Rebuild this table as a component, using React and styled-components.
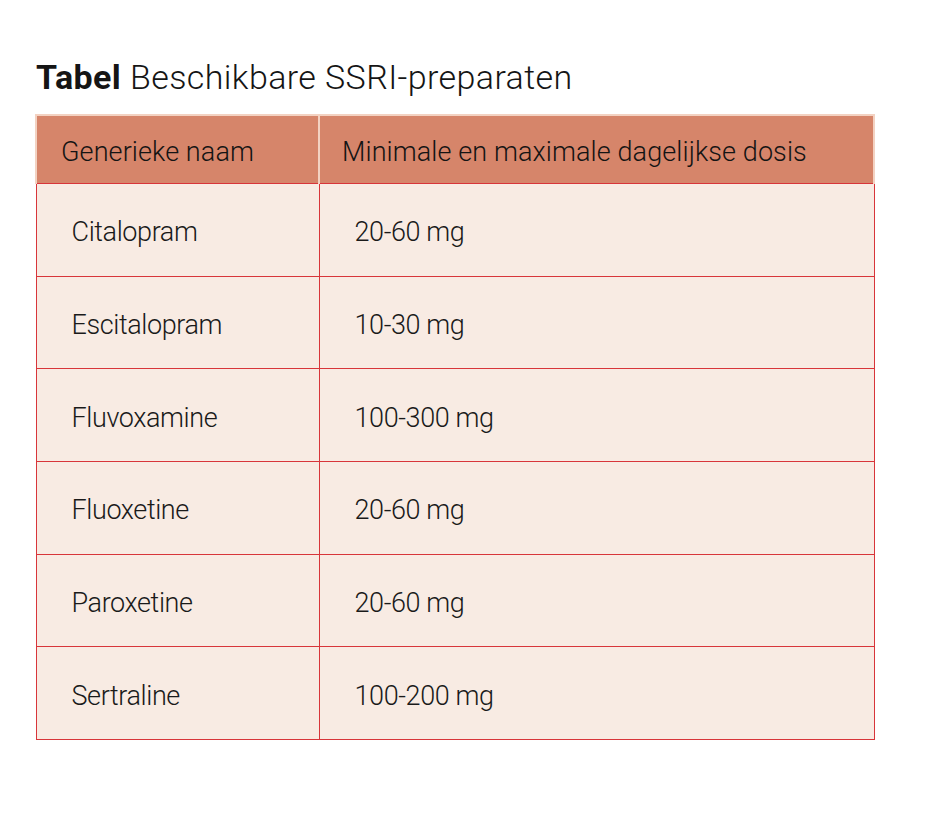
import React from 'react';
import styled, { createGlobalStyle } from 'styled-components';

const GlobalStyle = createGlobalStyle`
  body {
    margin: 0;
    background: #ffffff;
    font-family: Roboto, "DejaVu Sans Condensed", "Liberation Sans", sans-serif;
    color: #111;
  }
`;

const Page = styled.div`
  width: 951px;
  height: 818px;
  padding: 57px 0 0 35px;
  box-sizing: border-box;
`;

const Title = styled.h1`
  margin: 0 0 17px 1px;
  font-size: 34px;
  font-weight: 300;
  line-height: 40px;
  letter-spacing: 0.4px;
  color: #151515;

  b {
    font-weight: 700;
  }
`;

const Table = styled.table`
  width: 840px;
  border-collapse: collapse;
  table-layout: fixed;
`;

const HeadCell = styled.th`
  height: 63px;
  padding: 4px 0 0 ${props => (props.first ? 24 : 22)}px;
  background: #d6856a;
  border: 2px solid #f3d2c2;
  border-bottom: 1px solid #d8353a;
  text-align: left;
  font-size: 27px;
  font-weight: 300;
  letter-spacing: 0.1px;
  color: #141414;
  vertical-align: middle;
`;

const Cell = styled.td`
  height: 86.7px;
  padding: 5px 0 0 35px;
  background: #f8ebe3;
  border: 1px solid #d8353a;
  font-size: 27px;
  font-weight: 300;
  letter-spacing: -0.4px;
  color: #1a1a1a;
  vertical-align: middle;
`;

const rows = [
  ['Citalopram', '20-60 mg'],
  ['Escitalopram', '10-30 mg'],
  ['Fluvoxamine', '100-300 mg'],
  ['Fluoxetine', '20-60 mg'],
  ['Paroxetine', '20-60 mg'],
  ['Sertraline', '100-200 mg'],
];

export default function App() {
  return (
    <Page>
      <GlobalStyle />
      <Title>
        <b>Tabel</b> Beschikbare SSRI-preparaten
      </Title>
      <Table>
        <colgroup>
          <col style={{ width: '283px' }} />
          <col />
        </colgroup>
        <thead>
          <tr>
            <HeadCell first>Generieke naam</HeadCell>
            <HeadCell>Minimale en maximale dagelijkse dosis</HeadCell>
          </tr>
        </thead>
        <tbody>
          {rows.map(([name, dose]) => (
            <tr key={name}>
              <Cell>{name}</Cell>
              <Cell>{dose}</Cell>
            </tr>
          ))}
        </tbody>
      </Table>
    </Page>
  );
}
